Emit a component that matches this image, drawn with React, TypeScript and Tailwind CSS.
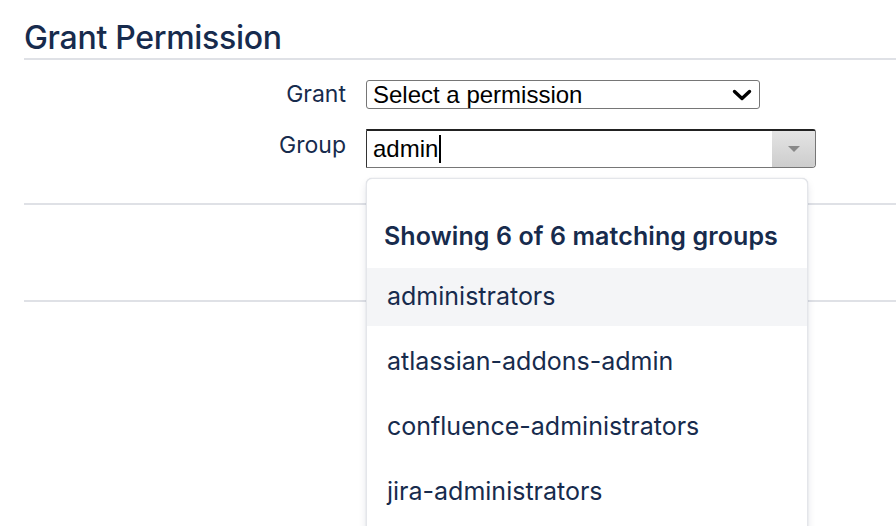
import React from "react";

const groups = [
  "administrators",
  "atlassian-addons-admin",
  "confluence-administrators",
  "jira-administrators",
];

export default function App() {
  return (
    <div
      className="relative w-[896px] h-[526px] overflow-hidden bg-white"
      style={{ fontFamily: "Inter, 'Noto Sans', sans-serif" }}
    >
      <div className="pl-[24px] pt-[22px]">
        <h2 className="text-[32px] leading-[32px] font-medium text-[#172b4d] tracking-[-0.3px]">
          Grant Permission
        </h2>
        <div className="mt-[4px] h-[2px] bg-[#dfe1e6]" />

        <div className="mt-[20px] flex flex-col gap-[20px]">
          <div className="flex items-center h-[29px]">
            <div className="w-[342px] pr-[20px] text-right text-[23px] leading-none text-[#172b4d]">Grant</div>
            <div
              className="w-[394px] h-[29px] border border-[#767676] rounded-[3px] flex items-center justify-between pl-[6px] pr-[7px] text-black text-[24px] leading-none"
              style={{ fontFamily: "'Liberation Sans', Arial, sans-serif" }}
            >
              <span>Select a permission</span>
              <svg width="20" height="12" viewBox="0 0 20 12">
                <path d="M2.5 2.5 L10 9.5 L17.5 2.5" fill="none" stroke="#000" strokeWidth="3.4" strokeLinecap="round" strokeLinejoin="round" />
              </svg>
            </div>
          </div>
          <div className="flex items-center h-[39px]">
            <div className="w-[342px] pr-[20px] text-right text-[23px] leading-none text-[#172b4d] -mt-[6px]">Group</div>
            <div className="w-[450px] h-[39px] flex border border-[#767676] border-t-[#222] border-l-[#333] border-t-2 rounded-br-[4px] rounded-tr-[3px] overflow-hidden">
              <div
                className="flex-1 flex items-center pl-[6px] text-black text-[24px] leading-none"
                style={{ fontFamily: "'Liberation Sans', Arial, sans-serif" }}
              >
                <span>admin</span>
                <span className="ml-[1px] w-[2px] h-[28px] bg-black" />
              </div>
              <div className="w-[43px] bg-gradient-to-b from-[#e4e4e4] to-[#cdcdcd] flex items-center justify-center">
                <svg width="12" height="7" viewBox="0 0 12 7">
                  <path d="M0 0 L12 0 L6 6 Z" fill="#888" />
                </svg>
              </div>
            </div>
          </div>
        </div>

        <div className="mt-[35px] h-[2px] bg-[#dfe1e6]" />
        <div className="mt-[95px] h-[2px] bg-[#dfe1e6]" />
      </div>

      <div className="absolute left-[366px] top-[178px] w-[442px] h-[400px] bg-white rounded-[6px] border border-[#e4e6ea] shadow-[0_4px_10px_-2px_rgba(9,30,66,0.18),0_0_1px_rgba(9,30,66,0.25)]">
        <div className="pt-[39px] pb-[14px] pl-[17px] text-[25px] leading-[36px] font-semibold text-[#172b4d] tracking-[0.1px]">
          Showing 6 of 6 matching groups
        </div>
        <div className="flex flex-col gap-[7px]">
          {groups.map((g, i) => (
            <div
              key={g}
              className={
                "h-[58px] flex items-center pl-[20px] text-[25px] text-[#172b4d] " +
                (i === 0 ? "bg-[#f4f5f7]" : "")
              }
            >
              {g}
            </div>
          ))}
        </div>
      </div>
    </div>
  );
}
